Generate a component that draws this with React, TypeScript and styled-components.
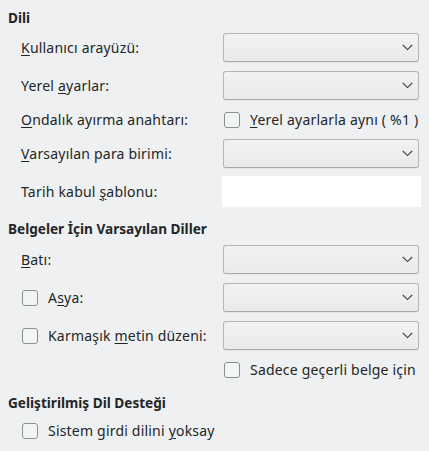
import React from "react";
import styled, { createGlobalStyle } from "styled-components";

const Global = createGlobalStyle`
  html, body { margin: 0; padding: 0; background: #eff0f1; }
  body { font-family: "Noto Sans", "DejaVu Sans", sans-serif; font-size: 14px; letter-spacing: 0.2px; color: #232627; }
`;

const Page = styled.div`
  width: 429px;
  height: 451px;
  box-sizing: border-box;
  padding: 9px 8px 0 8px;
  display: flex;
  flex-direction: column;
  overflow: hidden;
`;

const Heading = styled.div<{ $mt?: number }>`
  font-weight: 700;
  font-size: 13.6px;
  letter-spacing: 0;
  height: 18px;
  line-height: 18px;
  white-space: nowrap;
  margin-top: ${(p) => p.$mt ?? 0}px;
`;

const Rows = styled.div<{ $mt: number }>`
  display: flex;
  flex-direction: column;
  margin-top: ${(p) => p.$mt}px;
  padding-left: 13px;
`;

const Row = styled.div<{ $h: number; $mt?: number }>`
  display: grid;
  grid-template-columns: 202px 196px;
  align-items: center;
  height: ${(p) => p.$h}px;
  margin-top: ${(p) => p.$mt ?? 0}px;
`;

const Label = styled.span`
  display: block;
  white-space: nowrap;
  line-height: 18px;
`;

const U = styled.span`
  text-decoration: underline;
  text-underline-offset: 2px;
  text-decoration-thickness: 1px;
`;

const ComboBox = styled.div`
  height: 29px;
  box-sizing: border-box;
  border: 1px solid #b4b5b6;
  border-bottom-color: #a9aaab;
  border-radius: 3px;
  background: linear-gradient(#f1f2f2, #e9eaeb);
  display: flex;
  align-items: center;
  justify-content: flex-end;
  padding-right: 5px;
  box-shadow: 0 1px 0 rgba(0, 0, 0, 0.04);
`;

const TextField = styled.div`
  height: 31px;
  margin-left: -1px;
  margin-right: -2px;
  background: #ffffff;
`;

const Box = styled.span`
  display: inline-block;
  width: 16px;
  height: 16px;
  box-sizing: border-box;
  border: 1px solid #8d9092;
  border-radius: 3px;
  background: #f3f4f4;
  margin-right: 10px;
  flex: none;
`;

const CheckLabel = styled.span<{ $indent?: number }>`
  display: flex;
  align-items: center;
  white-space: nowrap;
  padding-left: ${(p) => p.$indent ?? 0}px;
`;

const CheckText = styled.span`
  line-height: 18px;
`;

const Chevron = () => (
  <svg width="11" height="7" viewBox="0 0 11 7" fill="none">
    <path d="M0.8 1 L5.5 5.6 L10.2 1" stroke="#3a3d3f" strokeWidth="1.1" />
  </svg>
);

const Combo = () => (
  <ComboBox>
    <Chevron />
  </ComboBox>
);

export default function App() {
  return (
    <>
      <Global />
      <Page>
        <Heading>Dili</Heading>
        <Rows $mt={6}>
          <Row $h={29}>
            <Label>
              <U>K</U>ullanıcı arayüzü:
            </Label>
            <Combo />
          </Row>
          <Row $h={29} $mt={9}>
            <Label>
              Yerel <U>a</U>yarlar:
            </Label>
            <Combo />
          </Row>
          <Row $h={21} $mt={9}>
            <Label>
              <U>O</U>ndalık ayırma anahtarı:
            </Label>
            <CheckLabel $indent={1}>
              <Box />
              <CheckText>
                <U>Y</U>erel ayarlarla aynı ( %1 )
              </CheckText>
            </CheckLabel>
          </Row>
          <Row $h={29} $mt={9}>
            <Label>
              <U>V</U>arsayılan para birimi:
            </Label>
            <Combo />
          </Row>
          <Row $h={31} $mt={8}>
            <Label>
              Tarih kabul <U>ş</U>ablonu:
            </Label>
            <TextField />
          </Row>
        </Rows>
        <Heading $mt={13}>Belgeler İçin Varsayılan Diller</Heading>
        <Rows $mt={7}>
          <Row $h={29}>
            <Label>
              <U>B</U>atı:
            </Label>
            <Combo />
          </Row>
          <Row $h={29} $mt={9}>
            <CheckLabel $indent={1}>
              <Box />
              <CheckText>
                A<U>s</U>ya:
              </CheckText>
            </CheckLabel>
            <Combo />
          </Row>
          <Row $h={29} $mt={9}>
            <CheckLabel $indent={1}>
              <Box />
              <CheckText>
                Karmaşık <U>m</U>etin düzeni:
              </CheckText>
            </CheckLabel>
            <Combo />
          </Row>
          <Row $h={21} $mt={9}>
            <span />
            <CheckLabel $indent={1}>
              <Box />
              <CheckText>
                Sadece <U>g</U>eçerli belge için
              </CheckText>
            </CheckLabel>
          </Row>
        </Rows>
        <Heading $mt={14}>Geliştirilmiş Dil Desteği</Heading>
        <Rows $mt={9}>
          <Row $h={20}>
            <CheckLabel $indent={1}>
              <Box />
              <CheckText>
                Sistem girdi dilini <U>y</U>oksay
              </CheckText>
            </CheckLabel>
            <span />
          </Row>
        </Rows>
      </Page>
    </>
  );
}
